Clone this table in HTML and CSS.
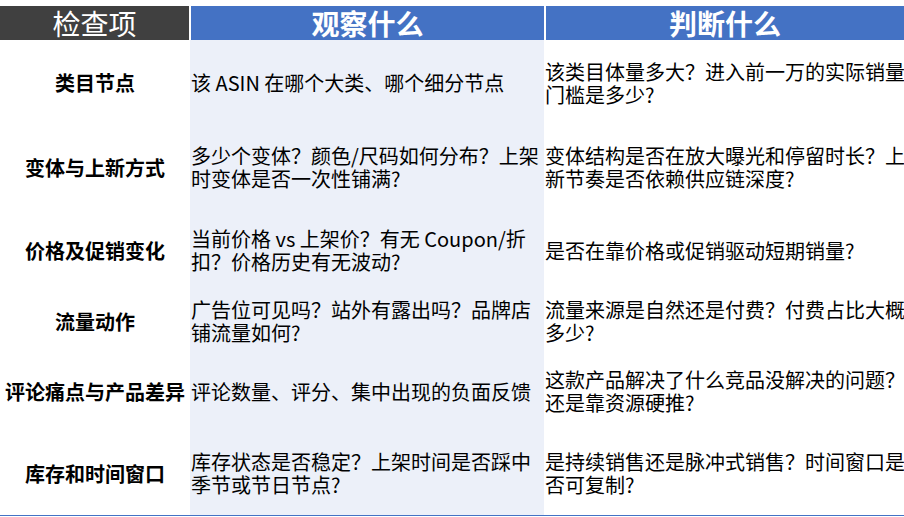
FILE: index.html
```html
<!DOCTYPE html>
<html lang="zh-CN">
<head>
<meta charset="utf-8">
<title>检查项</title>
<link rel="stylesheet" href="styles.css">
</head>
<body>
<div class="table">
  <div class="head">
    <div class="hcell h1">检查项</div>
    <div class="hcell h2">观察什么</div>
    <div class="hcell h3">判断什么</div>
  </div>
  <div class="row r1">
    <div class="cell c1">类目节点</div>
    <div class="cell c2">该 ASIN 在哪个大类、哪个细分节点</div>
    <div class="cell c3">该类目体量多大？进入前一万的实际销量<br>门槛是多少?</div>
  </div>
  <div class="row r2">
    <div class="cell c1">变体与上新方式</div>
    <div class="cell c2">多少个变体？颜色/尺码如何分布？上架<br>时变体是否一次性铺满?</div>
    <div class="cell c3">变体结构是否在放大曝光和停留时长？上<br>新节奏是否依赖供应链深度?</div>
  </div>
  <div class="row r3">
    <div class="cell c1">价格及促销变化</div>
    <div class="cell c2">当前价格 vs 上架价？有无 Coupon/折<br>扣？价格历史有无波动?</div>
    <div class="cell c3">是否在靠价格或促销驱动短期销量?</div>
  </div>
  <div class="row r4">
    <div class="cell c1">流量动作</div>
    <div class="cell c2">广告位可见吗？站外有露出吗？品牌店<br>铺流量如何?</div>
    <div class="cell c3">流量来源是自然还是付费？付费占比大概<br>多少?</div>
  </div>
  <div class="row r5">
    <div class="cell c1">评论痛点与产品差异</div>
    <div class="cell c2">评论数量、评分、集中出现的负面反馈</div>
    <div class="cell c3">这款产品解决了什么竞品没解决的问题？<br>还是靠资源硬推?</div>
  </div>
  <div class="row r6">
    <div class="cell c1">库存和时间窗口</div>
    <div class="cell c2">库存状态是否稳定？上架时间是否踩中<br>季节或节日节点?</div>
    <div class="cell c3">是持续销售还是脉冲式销售？时间窗口是<br>否可复制?</div>
  </div>
</div>
</body>
</html>
```

FILE: styles.css
```css
html, body {
  margin: 0;
  padding: 0;
  background: #ffffff;
}
body {
  font-family: "Noto Sans CJK SC", "Noto Sans", sans-serif;
  color: #000000;
  width: 904px;
  height: 517px;
  overflow: hidden;
}
.table {
  margin-top: 6px;
  width: 904px;
  border-bottom: 1px solid #4472c4;
}
.head {
  display: grid;
  grid-template-columns: 190px 354px 360px;
  height: 34px;
}
.hcell {
  display: flex;
  align-items: center;
  justify-content: center;
  color: #ffffff;
  font-size: 28px;
  line-height: 34px;
}
.h1 {
  background: #404040;
  border-right: 1px solid #ffffff;
  font-weight: 400;
}
.h2, .h3 {
  background: #4472c4;
  font-weight: 700;
}
.h2 {
  border-left: 1px solid #ffffff;
}
.h3 {
  border-left: 2px solid #ffffff;
}
.row {
  display: grid;
  grid-template-columns: 190px 354px 360px;
}
.r1 { height: 85px; }
.r2 { height: 84px; }
.r3 { height: 82px; }
.r4 { height: 60px; }
.r5 { height: 80px; }
.r6 { height: 84px; }
.cell {
  display: flex;
  align-items: center;
  font-size: 20px;
  line-height: 23px;
  white-space: nowrap;
}
.c1 {
  justify-content: center;
  font-weight: 700;
  text-align: center;
}
.c2 {
  background: #ecf0f9;
  padding-left: 1px;
}
.c3 {
  padding-left: 1px;
}
```
